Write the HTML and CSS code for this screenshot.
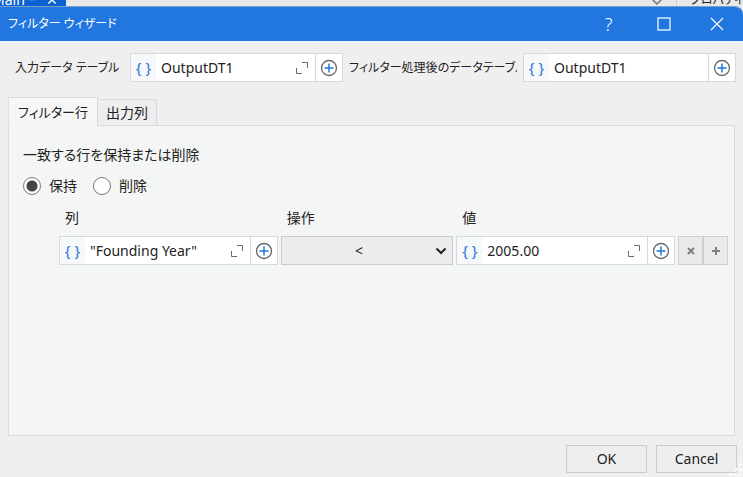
FILE: index.html
```html
<!DOCTYPE html>
<html lang="ja">
<head>
  <meta charset="UTF-8" />
  <meta name="viewport" content="width=device-width, initial-scale=1.0"/>
  <title>フィルター ウィザード</title>
  <link rel="stylesheet" href="styles.css">
</head>
<body>

  <!-- Shared icons -->
  <svg class="icon-defs" width="0" height="0">
    <symbol id="icon-expand" viewBox="0 0 14 14">
      <path d="M7 1.500h5.500v5.500M1.500 7v5.500h5.500" fill="none" stroke="#6b6b6b"/>
    </symbol>
    <symbol id="icon-add" viewBox="0 0 18 18">
      <circle cx="9" cy="9" r="7.500" fill="#fff" stroke="#66696c" stroke-width="1.300"/>
      <path d="M9 4.500v9M4.500 9h9" fill="none" stroke="#1f76dd" stroke-width="1.500"/>
    </symbol>
  </svg>

  <!-- Designer window behind the dialog -->
  <div class="backdrop">
    <div class="doc-tab"><span>Main *</span><span>✕</span></div>
    <div class="doc-space">
      <svg width="12" height="8" viewBox="0 0 12 8"><path d="M1 1l5 5 5-5" fill="none" stroke="#777" stroke-width="1.500"/></svg>
    </div>
    <div class="side-title">プロパティ</div>
  </div>

  <div class="dialog">
    <header class="title-bar">
      <h1>フィルター ウィザード</h1>
      <button class="window-button" aria-label="ヘルプ">?</button>
      <button class="window-button" aria-label="最大化">
        <svg width="14" height="14" viewBox="0 0 14 14"><rect x="1" y="1" width="12" height="12" fill="none" stroke="#fff" stroke-width="1.200"/></svg>
      </button>
      <button class="window-button" aria-label="閉じる">
        <svg width="14" height="14" viewBox="0 0 14 14"><path d="M1 1l12 12M13 1L1 13" fill="none" stroke="#fff" stroke-width="1.200"/></svg>
      </button>
    </header>

    <div class="tables">
      <label for="inputTable">入力データ テーブル</label>
      <div class="field">
        <span class="braces">{ }</span>
        <input type="text" id="inputTable" value="OutputDT1">
        <button class="expand" aria-label="展開"><svg width="14" height="14"><use href="#icon-expand"/></svg></button>
        <button class="add" aria-label="追加"><svg width="18" height="18"><use href="#icon-add"/></svg></button>
      </div>
      <label for="outputTable">フィルター処理後のデータテーブル</label>
      <div class="field">
        <span class="braces">{ }</span>
        <input type="text" id="outputTable" value="OutputDT1">
        <button class="add" aria-label="追加"><svg width="18" height="18"><use href="#icon-add"/></svg></button>
      </div>
    </div>

    <div class="tabs" role="tablist">
      <button class="tab active" role="tab" aria-selected="true">フィルター行</button>
      <button class="tab" role="tab" aria-selected="false">出力列</button>
    </div>

    <main class="panel">
      <div class="mode-title" id="modeTitle">一致する行を保持または削除</div>
      <div class="modes" role="radiogroup" aria-labelledby="modeTitle">
        <input type="radio" name="mode" id="keep" checked><label for="keep">保持</label>
        <input type="radio" name="mode" id="remove"><label for="remove">削除</label>
      </div>

      <div class="filter">
        <label for="column">列</label>
        <label for="operation">操作</label>
        <label for="value">値</label>
        <span></span>

        <div class="field">
          <span class="braces">{ }</span>
          <input type="text" id="column" value="&quot;Founding Year&quot;">
          <button class="expand" aria-label="展開"><svg width="14" height="14"><use href="#icon-expand"/></svg></button>
          <button class="add" aria-label="追加"><svg width="18" height="18"><use href="#icon-add"/></svg></button>
        </div>
        <div class="select">
          <select id="operation">
            <option selected>&lt;</option>
            <option>&gt;</option>
            <option>=</option>
          </select>
          <svg class="chevron" width="12" height="8" viewBox="0 0 12 8"><path d="M1.500 1.500L6 6l4.500-4.500" fill="none" stroke="#222" stroke-width="2"/></svg>
        </div>
        <div class="field">
          <span class="braces">{ }</span>
          <input type="text" id="value" value="2005.00">
          <button class="expand" aria-label="展開"><svg width="14" height="14"><use href="#icon-expand"/></svg></button>
          <button class="add" aria-label="追加"><svg width="18" height="18"><use href="#icon-add"/></svg></button>
        </div>
        <div class="row-actions">
          <button aria-label="行を削除"><svg width="8" height="8" viewBox="0 0 8 8"><path d="M1 1l6 6M7 1L1 7" stroke="#808080" stroke-width="2"/></svg></button>
          <button aria-label="行を追加"><svg width="8" height="8" viewBox="0 0 8 8"><path d="M4 0v8M0 4h8" stroke="#808080" stroke-width="2"/></svg></button>
        </div>
      </div>
    </main>

    <footer class="buttons">
      <button>OK</button>
      <button>Cancel</button>
    </footer>

    <svg class="grip" width="14" height="14" viewBox="0 0 14 14">
      <path d="M10 0h3v3h-3zM5 5h3v3H5zM10 5h3v3h-3zM0 10h3v3H0zM5 10h3v3H5zM10 10h3v3h-3z" fill="#fafafa"/>
    </svg>
  </div>

</body>
</html>
```
FILE: styles.css
```css
* {
  box-sizing: border-box;
}

body {
  margin: 0;
  min-height: 100vh;
  display: flex;
  flex-direction: column;
  background: #e8e8e8;
  color: #222;
  font-family: "Noto Sans", "Noto Sans CJK JP", sans-serif;
  font-size: 14px;
  line-height: 20px;
  font-feature-settings: "palt";
}

button,
input,
select {
  margin: 0;
  padding: 0;
  border: 0;
  border-radius: 0;
  background: none;
  color: inherit;
  font: inherit;
  font-feature-settings: inherit;
}

button {
  display: flex;
  align-items: center;
  justify-content: center;
}

.icon-defs {
  position: absolute;
}

/* Window behind */
.backdrop {
  display: flex;
  align-items: flex-end;
  height: 6px;
  overflow: hidden;
}

.doc-tab {
  display: flex;
  justify-content: space-between;
  width: 66px;
  padding-right: 8px;
  background: #0a62d0;
  color: #fff;
  line-height: 12px;
}

.doc-tab span:first-child {
  margin-left: -8px;
}

.doc-space {
  flex: 1;
  display: flex;
  justify-content: flex-end;
  padding-right: 13px;
}

.side-title {
  width: 67px;
  padding-left: 13px;
  border-left: 1px solid #ccc;
  font-size: 12px;
  line-height: 12px;
  white-space: nowrap;
}

/* Dialog */
.dialog {
  position: relative;
  flex: 1;
  display: flex;
  flex-direction: column;
  border-top: 1px solid #7f9fc4;
  border-radius: 0 8px 0 0;
  background: #efefef;
  overflow: hidden;
}

.title-bar {
  display: flex;
  height: 34px;
  padding-left: 8px;
  background: #2177df;
  color: #fff;
}

.title-bar h1 {
  flex: 1;
  margin: 0;
  font-size: 12px;
  font-weight: normal;
  line-height: 34px;
}

.window-button {
  width: 55px;
  font-size: 18px;
  font-weight: 300;
}

.window-button:last-child {
  width: 52px;
}

.tables {
  display: grid;
  grid-template-columns: 109px 1fr 168px 1fr;
  align-items: center;
  gap: 6px;
  padding: 12px 7px 0 15px;
}

.tables label {
  font-size: 12px;
  white-space: nowrap;
  overflow: hidden;
}

.field {
  display: flex;
  height: 29px;
  min-width: 0;
  border: 1px solid #d3dae0;
  background: #fff;
}

.braces {
  width: 25px;
  background: #f7f8f9;
  color: #1f76dd;
  font-size: 15px;
  line-height: 26px;
  text-align: center;
}

.field input {
  flex: 1;
  min-width: 0;
  padding-left: 5px;
  outline: none;
}

.expand {
  width: 26px;
}

.add {
  width: 27px;
  border-left: 1px solid #d3dae0;
}

.tabs {
  display: flex;
  align-items: flex-end;
  padding: 15px 8px 0;
}

.tab {
  height: 26px;
  padding: 0 8px;
  border: 1px solid #d8dadb;
  border-left: 0;
  border-bottom: 0;
  background: #eeeef0;
}

.tab.active {
  height: 29px;
  margin-bottom: -1px;
  padding: 0 9px;
  border-left: 1px solid #e0e2e2;
  background: #f5f7f6;
  font-size: 13px;
  z-index: 1;
}

.panel {
  flex: 1;
  margin: 0 8px;
  padding: 19px 6px 0 14px;
  border: 1px solid #d8dadb;
  background: #f4f6f5;
}

.modes {
  display: flex;
  align-items: center;
  margin-top: 11px;
}

.modes label {
  margin: 0 16px 0 8px;
}

.modes input {
  appearance: none;
  width: 18px;
  height: 18px;
  border: 1px solid #777;
  border-radius: 50%;
  background: #fff;
}

.modes input:checked {
  background: radial-gradient(circle, #444 5px, #fff 6px);
}

.filter {
  display: grid;
  grid-template-columns: 219fr 173fr 219fr 50px;
  gap: 8px 3px;
  padding: 12px 0 0 36px;
}

.filter > label {
  padding-left: 6px;
}

.select {
  position: relative;
}

.select select {
  appearance: none;
  width: 100%;
  height: 29px;
  padding: 0 16px 0 0;
  border: 1px solid #c9cbcc;
  background: #ececee;
  text-align: center;
  text-align-last: center;
}

.chevron {
  position: absolute;
  right: 6px;
  top: 11px;
  pointer-events: none;
}

.row-actions {
  display: flex;
}

.row-actions button {
  flex: 1;
  border: 1px solid #cdcecf;
  background: #eaeaec;
}

.buttons {
  display: flex;
  justify-content: flex-end;
  gap: 9px;
  padding: 9px 6px 4px;
}

.buttons button {
  width: 81px;
  height: 28px;
  border: 1px solid #cbccd0;
  background: #eeeef0;
}

.grip {
  position: absolute;
  right: 0;
  bottom: 0;
}
```
